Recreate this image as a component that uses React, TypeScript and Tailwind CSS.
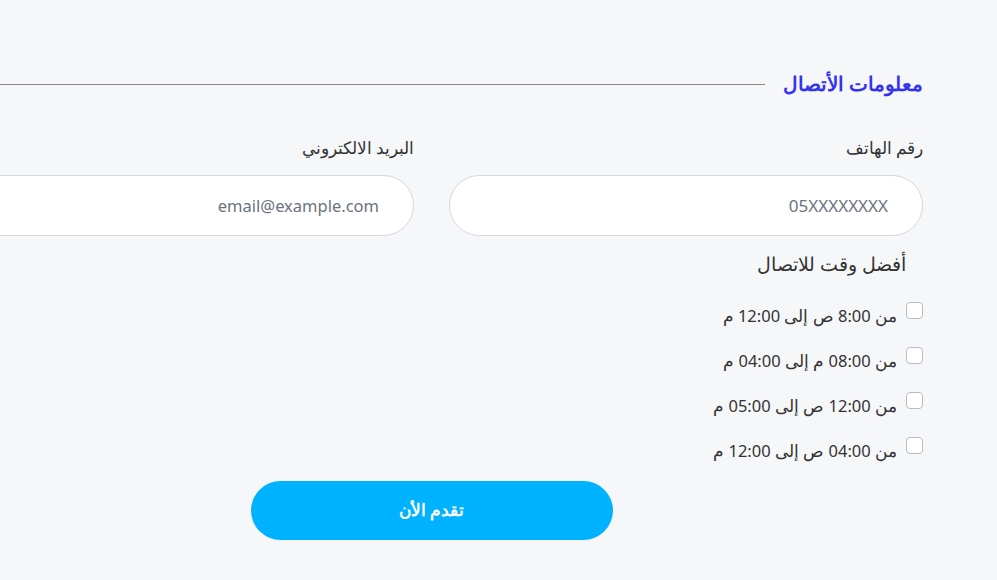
export default function App() {
  const times = [
    "من 8:00 ص إلى 12:00 م",
    "من 08:00 م إلى 04:00 م",
    "من 12:00 ص إلى 05:00 م",
    "من 04:00 ص إلى 12:00 م",
  ]

  return (
    <div dir="rtl" className="min-h-[580px] overflow-hidden bg-[#f6f7f9] font-['Noto_Sans',sans-serif] text-[#333]">
      <div className="mr-[74px] w-[983px] pt-[70px]">
        <div className="flex h-[28px] items-center gap-[18px]">
          <h2 className="text-[20px] font-semibold leading-[28px] text-[#3434f0]">معلومات الأتصال</h2>
          <div className="h-px flex-1 bg-[#8a8a8a]" />
        </div>

        <div className="mt-[39px] grid grid-cols-2 gap-[35px]">
          <div>
            <label className="block h-[22px] text-[16.5px] leading-[22px]">رقم الهاتف</label>
            <input
              placeholder="05XXXXXXXX"
              className="mt-[16px] h-[61px] w-full rounded-full border border-[#d4d7dd] bg-white px-[34px] text-[17px] placeholder:text-[#6b7280] outline-none"
            />
          </div>
          <div>
            <label className="block h-[22px] text-[16.5px] leading-[22px]">البريد الالكتروني</label>
            <input
              placeholder="email@example.com"
              className="mt-[16px] h-[61px] w-full rounded-full border border-[#d4d7dd] bg-white px-[34px] text-[16.5px] placeholder:text-[#6b7280] outline-none"
            />
          </div>
        </div>

        <p className="mr-[17px] mt-[15px] h-[26px] text-[19px] leading-[26px]">أفضل وقت للاتصال</p>

        <div className="mt-[25px] flex flex-col gap-[21px]">
          {times.map((t) => (
            <label key={t} className="flex h-[24px] items-start gap-[9px] text-[16.5px] leading-[24px]">
              <span className="h-[17px] w-[17px] shrink-0 rounded-[4px] border border-[#b8bcc2] bg-white" />
              <span className="mt-[2px]">{t}</span>
            </label>
          ))}
        </div>

        <div className="mt-[20px] flex justify-center">
          <button className="h-[59px] w-[362px] rounded-full bg-[#00b2ff] text-[16.5px] font-semibold text-white">
            تقدم الأن
          </button>
        </div>
      </div>
    </div>
  )
}
